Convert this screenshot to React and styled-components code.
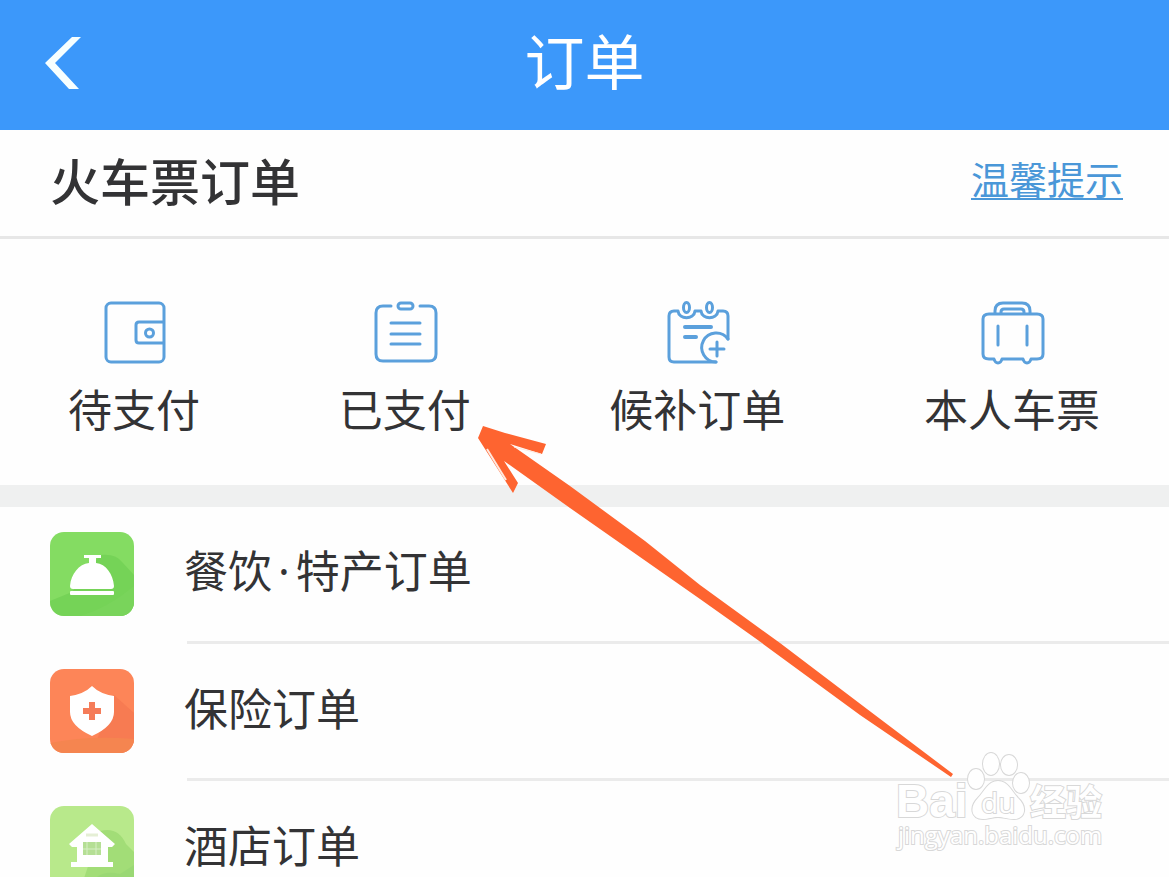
import React from 'react'
import styled, { createGlobalStyle } from 'styled-components'

const GlobalStyle = createGlobalStyle`
  * { box-sizing: border-box; }
  body {
    margin: 0;
    background: #fefefe;
    color: #333335;
    font-family: "Noto Sans CJK SC", "Noto Sans", sans-serif;
  }
`

const Page = styled.div`
  position: relative;
  height: 100vh;
  overflow: hidden;
`

const Header = styled.header`
  display: grid;
  grid-template-columns: 1fr auto 1fr;
  align-items: center;
  height: 130px;
  padding: 0 40px 4px;
  background: #3c98fa;
  color: #fff;
`

const BackButton = styled.button`
  display: flex;
  justify-self: start;
  padding: 0;
  border: 0;
  background: none;
  color: inherit;
`

const Title = styled.h1`
  margin: 0;
  padding-bottom: 8px;
  font-size: 60px;
  font-weight: 400;
  line-height: 80px;
`

const SectionHead = styled.div`
  display: flex;
  align-items: center;
  justify-content: space-between;
  height: 109px;
  padding: 0 46px 8px 50px;
  border-bottom: 3px solid #e7e7e7;
`

const SectionTitle = styled.h2`
  margin: 0;
  font-size: 50px;
  font-weight: 500;
  line-height: 64px;
`

const TipsLink = styled.a`
  border-bottom: 2px solid #4a97d8;
  color: #4a97d8;
  font-size: 38px;
  line-height: 40px;
  text-decoration: none;
`

const Tabs = styled.nav`
  display: flex;
  justify-content: space-between;
  padding: 62px 69px 47px 68px;
  border-bottom: 22px solid #eff0f0;
`

const Tab = styled.button`
  display: flex;
  flex-direction: column;
  align-items: center;
  gap: 13px;
  padding: 0;
  border: 0;
  background: none;
  color: inherit;
  font: inherit;
  font-size: 44px;
  line-height: 60px;
`

const LineIcon = styled.svg`
  width: 64px;
  height: 64px;
  overflow: visible;
  fill: none;
  stroke: #5ba0dc;
  stroke-width: 3;
  stroke-linecap: round;
  stroke-linejoin: round;
`

const List = styled.ul`
  margin: 0;
  padding: 0;
  list-style: none;
`

const Item = styled.li`
  &::after {
    content: "";
    display: block;
    height: 3px;
    margin-left: 187px;
    background: #ebebeb;
  }
`

const ItemLink = styled.a`
  display: flex;
  align-items: center;
  gap: 50px;
  padding: 25px 50px;
  color: inherit;
  font-size: 44px;
  line-height: 60px;
  text-decoration: none;
`

const Tile = styled.svg`
  width: 84px;
  height: 84px;
  border-radius: 14px;
  background: ${props => props.$color};
`

const ItemName = styled.span`
  padding-bottom: 8px;
`

const Dot = styled.span`
  padding: 0 6px;
  font-family: "Noto Sans", sans-serif;
`

const Pointer = styled.svg`
  position: absolute;
  top: 420px;
  left: 470px;
  width: 490px;
  height: 364px;
  pointer-events: none;
`

const Watermark = styled.svg`
  position: absolute;
  right: 59px;
  bottom: 17px;
  width: 220px;
  height: 115px;
  overflow: visible;
  fill: #fff;
  stroke: #d8d8d8;
  stroke-width: 2;
  paint-order: stroke;
  pointer-events: none;
`

const WalletIcon = () => (
  <LineIcon viewBox="0 0 64 64">
    <rect x="4" y="2" width="58" height="59" rx="5" />
    <path d="M61 21H37q-3 0-3 3v15q0 3 3 3h24" />
    <circle cx="47.5" cy="32" r="4" />
  </LineIcon>
)

const ClipboardIcon = () => (
  <LineIcon viewBox="0 0 64 64">
    <path d="M18 5h-8q-7 0-7 7v41q0 7 7 7h46q7 0 7-7V12q0-7-7-7h-9" />
    <rect x="25" y="2" width="15" height="6" rx="3" />
    <path d="M18 22h29M18 33h29M18 43h29" />
  </LineIcon>
)

const CalendarIcon = () => (
  <LineIcon viewBox="0 0 64 64">
    <path d="M51 61H9q-5 0-5-5V15q0-5 5-5h4c1 9 16 9 17 0h6c1 9 16 9 17 0h5q5 0 5 5v23" />
    <ellipse cx="21.5" cy="6.5" rx="3" ry="5" />
    <ellipse cx="44.5" cy="6.5" rx="3" ry="5" />
    <path d="M20 26h26M20 36h11" strokeWidth="4" />
    <path d="M63 38A14.5 14.5 0 1 0 51 61" />
    <path d="M45 48h14M52 41v14" />
  </LineIcon>
)

const SuitcaseIcon = () => (
  <LineIcon viewBox="0 0 64 64">
    <path d="M15 12v-2q0-8 8-8h19q8 0 8 8v2M21 12v-1q0-3 3-3h17q3 0 3 3v1" />
    <path d="M9 13h48q6 0 6 5v35q0 5-6 5h-6q-1 4-4 4t-4-4H22q-1 4-4 4t-4-4H9q-6 0-6-5V18q0-5 6-5z" />
    <path d="M18 25v19M47 25v19" />
  </LineIcon>
)

const BellTile = () => (
  <Tile $color="#84dc62" viewBox="0 0 84 84">
    <path d="M50 23q16-2 23 8l11 12v41H0V69l22-9z" fill="#6fce53" opacity=".7" />
    <path d="M30 84q28-8 54-30v30z" fill="#79d45b" />
    <path d="M34 23h17v3h-5v5C56 32 63 42 64 54q0 3-3 3H23q-3 0-3-3C21 42 29 32 39 31v-5h-5z" fill="#fff" />
    <rect x="20" y="59" width="44" height="4" rx="1" fill="#fff" />
  </Tile>
)

const ShieldTile = () => (
  <Tile $color="#fd8558" viewBox="0 0 84 84">
    <path d="M64 26l20 18v40H42z" fill="#f37650" opacity=".7" />
    <path d="M0 74q40-8 84-4v14H0z" fill="#f58550" />
    <path d="M42 17q8 8 22 10v16q0 14-22 24Q20 57 20 43V27q14-2 22-10z" fill="#fff" />
    <path d="M42 33v18M33 42h18" stroke="#f57c59" strokeWidth="6" />
  </Tile>
)

const HouseTile = () => (
  <Tile $color="#b8e98b" viewBox="0 0 84 84">
    <path d="M50 25q18-5 26 13l8 8v38H30z" fill="#a2dd77" />
    <path d="M38 84q8-22 32-16l14-9v25z" fill="#94d573" opacity=".6" />
    <path d="M42 18l23 20-3 3h-4v15h5v5H21v-5h6V41h-5l-3-3z" fill="#fff" />
    <path d="M33 36h18v13H33z" fill="#b5df95" />
    <path d="M37 36v13M46 36v13M33 43h18" stroke="#d7efc5" />
    <path d="M36 29h12" stroke="#e5efd5" strokeWidth="3" />
  </Tile>
)

const tabs = [
  { name: '待支付', Icon: WalletIcon },
  { name: '已支付', Icon: ClipboardIcon },
  { name: '候补订单', Icon: CalendarIcon },
  { name: '本人车票', Icon: SuitcaseIcon }
]

const orders = [
  { id: 'food', name: <>餐饮<Dot>·</Dot>特产订单</>, Icon: BellTile },
  { id: 'insurance', name: '保险订单', Icon: ShieldTile },
  { id: 'hotel', name: '酒店订单', Icon: HouseTile }
]

const App = () => {
  return (
    <Page>
      <GlobalStyle />
      <Header>
        <BackButton aria-label="返回">
          <svg width="44" height="52" viewBox="0 0 44 52">
            <path d="M5 26L32 0h9L15 26l24 26H29z" fill="#f7ffff" />
          </svg>
        </BackButton>
        <Title>订单</Title>
      </Header>
      <SectionHead>
        <SectionTitle>火车票订单</SectionTitle>
        <TipsLink href="#tips">温馨提示</TipsLink>
      </SectionHead>
      <Tabs>
        {tabs.map(({ name, Icon }) => (
          <Tab key={name}>
            <Icon />
            {name}
          </Tab>
        ))}
      </Tabs>
      <List>
        {orders.map(({ id, name, Icon }) => (
          <Item key={id}>
            <ItemLink href={`#${id}`}>
              <Icon />
              <ItemName>{name}</ItemName>
            </ItemLink>
          </Item>
        ))}
      </List>
      <Pointer viewBox="0 0 490 364" aria-hidden="true">
        <path
          d="M13 6L35 13 76 24 72 34 40 24 100 66 175 121 230 165 310 223 397 289 483 354 481 357 390 295 285 218 230 179 170 137 100 88 34 41 48 63 43 73 8 18z"
          fill="#fe6430"
        />
        <path d="M17 29L36 60" stroke="#ffe9df" strokeWidth="2" />
        <path d="M44 27L71 34" stroke="#ffe9df" />
      </Pointer>
      <Watermark viewBox="0 0 220 115">
        <text x="6" y="72" fontFamily="Liberation Sans, sans-serif" fontSize="46" fontWeight="700">Bai</text>
        <ellipse cx="86" cy="34" rx="8" ry="10" />
        <ellipse cx="101" cy="19" rx="8" ry="11" />
        <ellipse cx="119" cy="20" rx="8" ry="10" />
        <ellipse cx="131" cy="38" rx="8" ry="10" />
        <path d="M108 36c10 0 14 11 20 17 10 9 7 21-4 21-8 0-10-2-16-2s-9 2-15 2c-12 0-14-12-5-21 6-6 10-17 20-17z" />
        <text x="91" y="68" fontFamily="Open Sans, sans-serif" fontSize="28">du</text>
        <text x="140" y="71" fontSize="36" fontWeight="700">经验</text>
        <text x="8" y="99" fontFamily="Open Sans, sans-serif" fontSize="24">jingyan.baidu.com</text>
      </Watermark>
    </Page>
  )
}

export default App
